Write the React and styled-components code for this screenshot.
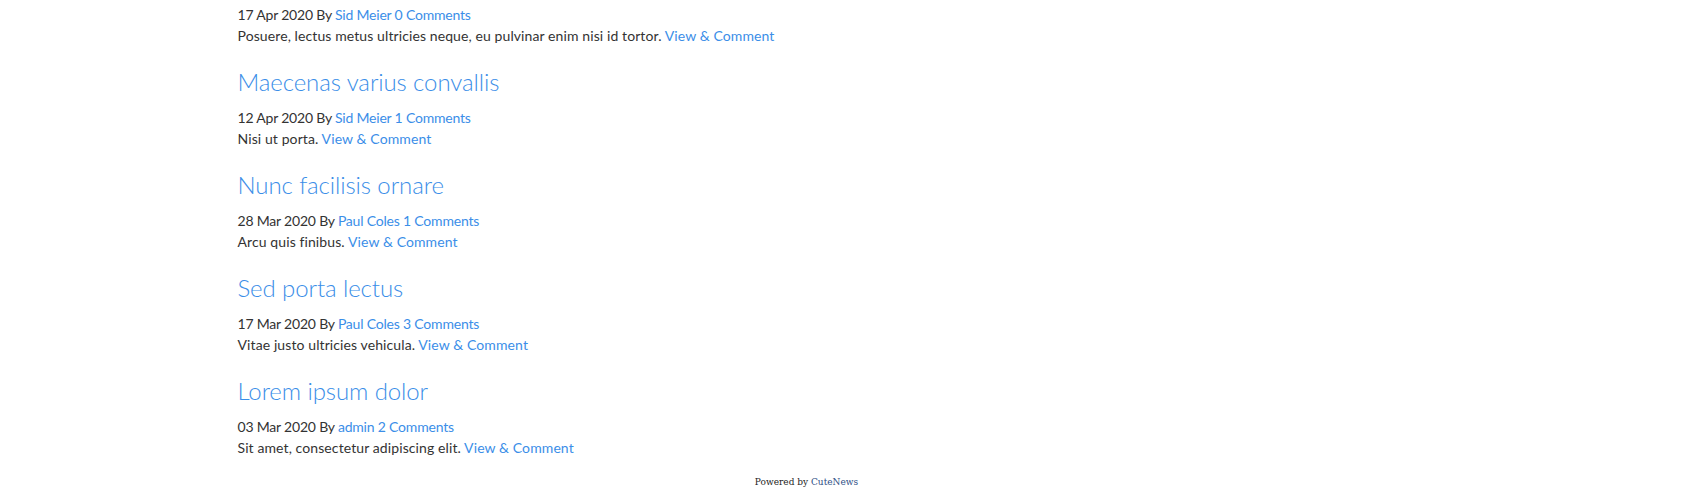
import styled, { createGlobalStyle } from 'styled-components'

const GlobalStyle = createGlobalStyle`
  body {
    margin: 0;
    background: #fff;
    font-family: Lato, "Open Sans", sans-serif;
    color: #333;
  }
`

const Page = styled.div`
  width: 1232px;
  margin: 0 auto;
  padding-top: 4px;
`

const Column = styled.main`
  width: 1138px;
`

const Post = styled.article`
  margin-bottom: 21px;
`

const Title = styled.h2`
  margin: 0 0 10px;
  font-size: 24px;
  line-height: 30px;
  font-weight: 300;
  letter-spacing: -0.1px;
  color: #3b8ee8;
`

const Line = styled.p`
  margin: 0;
  font-size: 14px;
  line-height: 21px;
  letter-spacing: ${p => (p.$meta ? '-0.2px' : '0.1px')};
`

const Link = styled.a`
  color: #3b8ee8;
  text-decoration: none;
`

const Footer = styled.footer`
  margin-top: -4px;
  text-align: center;
  font-family: "DejaVu Serif", serif;
  font-size: 9px;
  line-height: 14px;
  color: #222;
  a {
    color: #2f4f86;
    text-decoration: none;
  }
`

const posts = [
  { date: '17 Apr 2020', author: 'Sid Meier', comments: 0, text: 'Posuere, lectus metus ultricies neque, eu pulvinar enim nisi id tortor.' },
  { title: 'Maecenas varius convallis', date: '12 Apr 2020', author: 'Sid Meier', comments: 1, text: 'Nisi ut porta.' },
  { title: 'Nunc facilisis ornare', date: '28 Mar 2020', author: 'Paul Coles', comments: 1, text: 'Arcu quis finibus.' },
  { title: 'Sed porta lectus', date: '17 Mar 2020', author: 'Paul Coles', comments: 3, text: 'Vitae justo ultricies vehicula.' },
  { title: 'Lorem ipsum dolor', date: '03 Mar 2020', author: 'admin', comments: 2, text: 'Sit amet, consectetur adipiscing elit.' },
]

export default function App() {
  return (
    <>
      <GlobalStyle />
      <Page>
        <Column>
          {posts.map((p, i) => (
            <Post key={i}>
              {p.title && <Title><Link href="#">{p.title}</Link></Title>}
              <Line $meta>
                {p.date} By <Link href="#">{p.author}</Link> <Link href="#">{p.comments} Comments</Link>
              </Line>
              <Line>
                {p.text} <Link href="#">View &amp; Comment</Link>
              </Line>
            </Post>
          ))}
          <Footer>
            Powered by <a href="#">CuteNews</a>
          </Footer>
        </Column>
      </Page>
    </>
  )
}
